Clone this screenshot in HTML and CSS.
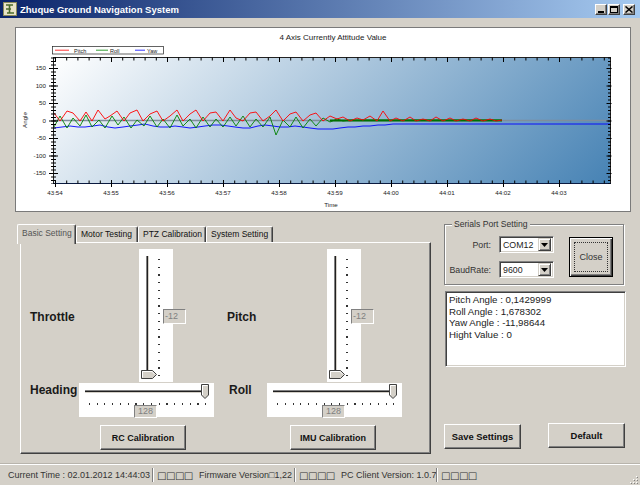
FILE: index.html
```html
<!DOCTYPE html>
<html>
<head>
<meta charset="utf-8">
<title>Zhuque Ground Navigation System</title>
<link rel="stylesheet" href="styles.css">
</head>
<body>
<div class="window">
  <div class="titlebar">
    <svg class="appicon" width="14" height="14" viewBox="0 0 14 14">
      <rect x="0.5" y="0.5" width="13" height="13" fill="#e8e4c8" stroke="#8a8a5a"/>
      <path d="M3 3h7M6.5 3v8M3 7h5M4 11h7" stroke="#4a6a2a" stroke-width="1.6" fill="none"/>
    </svg>
    <span class="title">Zhuque Ground Navigation System</span>
    <div class="capbtns">
      <span class="capbtn"><svg width="8" height="7" viewBox="0 0 8 7"><rect x="1" y="5" width="6" height="2" fill="#000"/></svg></span>
      <span class="capbtn"><svg width="8" height="7" viewBox="0 0 8 7"><rect x="0.5" y="0.5" width="7" height="6" fill="none" stroke="#000"/><rect x="0" y="0" width="8" height="2" fill="#000"/></svg></span>
      <span class="capbtn cap-close"><svg width="8" height="7" viewBox="0 0 8 7"><path d="M0.5 0.5L7.5 6.5M7.5 0.5L0.5 6.5" stroke="#000" stroke-width="1.5"/></svg></span>
    </div>
  </div>

  <div class="client">
    <div class="chart">
      <svg class="plot" width="614" height="183" viewBox="16 28 614 183">
        <defs>
          <linearGradient id="bg" gradientUnits="userSpaceOnUse" x1="53" y1="57" x2="395.5" y2="399.5">
            <stop offset="0" stop-color="#ffffff"/>
            <stop offset="1" stop-color="#4682b4"/>
          </linearGradient>
          <clipPath id="clip"><rect x="53" y="57" width="558" height="127"/></clipPath>
        </defs>
        <text class="ctitle" x="333" y="40" text-anchor="middle">4 Axis Currently Attitude Value</text>

        <rect x="52.5" y="46.5" width="111" height="7.5" fill="#fff" stroke="#222" stroke-width="0.7"/>
        <line x1="55" y1="50.2" x2="69" y2="50.2" stroke="#f00" stroke-width="0.8"/>
        <text class="leg" x="74" y="52.6">Pitch</text>
        <line x1="96" y1="50.2" x2="108" y2="50.2" stroke="#080" stroke-width="0.8"/>
        <text class="leg" x="110" y="52.6">Roll</text>
        <line x1="135" y1="50.2" x2="145" y2="50.2" stroke="#00f" stroke-width="0.8"/>
        <text class="leg" x="147" y="52.6">Yaw</text>

        <rect x="53" y="57" width="558" height="127" fill="url(#bg)"/>

        <g clip-path="url(#clip)" fill="none">
          <line x1="53" y1="120.5" x2="611" y2="120.5" stroke="#7f8d9c" stroke-width="1.6"/>
          <polyline stroke="#0000ff" stroke-width="0.9" points="54,128 62,127 70,126 78,127 85,127 93,126 100,125 108,127 115,128 123,127 130,126 138,125 145,124 153,126 160,127 168,127 175,126 183,127 190,128 198,127 205,126 213,125 220,125 228,126 235,127 243,128 250,128 258,126 265,125 273,126 280,127 288,127 295,126 303,127 310,128 318,129 325,129 333,129 340,128 348,127 355,127 363,126 370,126 378,125 385,125 393,124 400,124 420,124 450,124 500,124 611,124"/>
          <polyline stroke="#008000" stroke-width="0.9" points="54,127 60,116 67,128 73,118 80,126 86,115 92,127 99,120 105,128 112,116 118,125 124,117 131,128 137,120 144,126 150,116 157,127 163,119 170,128 177,115 183,126 190,119 196,128 203,117 210,127 216,119 223,127 230,117 236,126 243,116 250,127 256,119 263,127 270,117 276,135 283,120 290,127 296,117 303,128 310,119 316,126 323,118 330,122 337,119 343,121 350,120 502,120"/>
          <line x1="330" y1="120.5" x2="502" y2="120.5" stroke="#007000" stroke-width="2"/>
          <polyline stroke="#ff0000" stroke-width="0.9" points="54,113 60,121 67,111 73,113 80,121 86,112 92,121 98,110 105,119 110,116 117,111 124,121 130,113 137,110 143,121 150,114 157,111 163,121 170,116 177,110 183,121 190,114 196,110 203,121 210,113 216,112 223,121 230,110 236,118 243,121 250,113 256,112 263,121 270,116 276,110 283,121 290,114 296,112 303,121 310,115 316,113 323,121 330,116 337,119 343,117 350,121 357,118 363,120 370,116 377,121 383,111 390,121 396,118 403,121 410,117 416,121 423,119 430,121 436,117 443,121 450,118 456,121 463,119 470,121 476,118 483,121 490,119 496,121 502,120"/>
        </g>

        <g stroke="#000" fill="none">
          <rect x="53.5" y="57.5" width="557" height="126" stroke="#222"/>
          <line x1="53" y1="183.5" x2="611" y2="183.5" stroke="#0a1a40" stroke-width="1.2"/>
          <line x1="55" y1="182" x2="611" y2="182" stroke-width="3" stroke-dasharray="1 10.2"/>
          <line x1="55" y1="183.5" x2="611" y2="183.5" stroke-width="7" stroke-dasharray="1 55"/>
          <line x1="55" y1="59" x2="611" y2="59" stroke-width="3" stroke-dasharray="1 10.2"/>
          <line x1="55" y1="59.5" x2="611" y2="59.5" stroke-width="5" stroke-dasharray="1 55"/>
          <line x1="53.5" y1="57.5" x2="53.5" y2="184" stroke-width="5" stroke-dasharray="1 2.5"/>
          <line x1="53.5" y1="68" x2="53.5" y2="184" stroke-width="9" stroke-dasharray="1 16.5"/>
          <line x1="609.5" y1="57.5" x2="609.5" y2="184" stroke-width="3" stroke-dasharray="1 2.5"/>
          <line x1="609" y1="68" x2="609" y2="184" stroke-width="5" stroke-dasharray="1 16.5"/>
        </g>

        <g class="ax" text-anchor="end">
          <text x="46" y="70.2">150</text>
          <text x="46" y="87.7">100</text>
          <text x="46" y="105.2">50</text>
          <text x="46" y="122.7">0</text>
          <text x="46" y="140.2">-50</text>
          <text x="46" y="157.7">-100</text>
          <text x="46" y="175.2">-150</text>
        </g>
        <g class="ax" text-anchor="middle">
          <text x="55" y="195">43:54</text>
          <text x="111" y="195">43:55</text>
          <text x="167" y="195">43:56</text>
          <text x="223" y="195">43:57</text>
          <text x="279" y="195">43:58</text>
          <text x="335" y="195">43:59</text>
          <text x="391" y="195">44:00</text>
          <text x="447" y="195">44:01</text>
          <text x="503" y="195">44:02</text>
          <text x="559" y="195">44:03</text>
          <text x="331" y="206.5">Time</text>
          <text transform="translate(26.5 120) rotate(-90)">Angle</text>
        </g>
      </svg>
    </div>

    <div class="lower">
      <div class="tabctl">
        <div class="tabs">
          <div class="tab active">Basic Setting</div>
          <div class="tab">Motor Testing</div>
          <div class="tab">PTZ Calibration</div>
          <div class="tab">System Setting</div>
        </div>
        <div class="panel">
          <div class="grp grp-l">
            <div class="r1">
              <span class="big lbl-v">Throttle</span>
              <div class="vslider">
                <div class="vtrack"></div>
                <div class="vticks"></div>
                <svg class="vthumb" width="16" height="9" viewBox="0 0 16 9"><polygon points="0.5,0.5 11.5,0.5 15.5,4.5 11.5,8.5 0.5,8.5" fill="#d4d0c8" stroke="#404040"/><polyline points="1.5,7.5 1.5,1.5 11,1.5 14,4.5" fill="none" stroke="#fff"/></svg>
                <span class="val vval">-12</span>
              </div>
            </div>
            <div class="r2">
              <span class="big lbl-h">Heading</span>
              <div class="hslider">
                <div class="htrack"></div>
                <div class="hticks"></div>
                <svg class="hthumb" width="8" height="15" viewBox="0 0 8 15"><polygon points="0.5,0.5 7.5,0.5 7.5,11 4,14.5 0.5,11" fill="#d4d0c8" stroke="#404040"/><polyline points="1.5,11 1.5,1.5 6.5,1.5" fill="none" stroke="#fff"/></svg>
                <span class="val hval">128</span>
              </div>
            </div>
            <div class="btn cal">RC Calibration</div>
          </div>

          <div class="grp grp-r">
            <div class="r1">
              <span class="big lbl-v">Pitch</span>
              <div class="vslider">
                <div class="vtrack"></div>
                <div class="vticks"></div>
                <svg class="vthumb" width="16" height="9" viewBox="0 0 16 9"><polygon points="0.5,0.5 11.5,0.5 15.5,4.5 11.5,8.5 0.5,8.5" fill="#d4d0c8" stroke="#404040"/><polyline points="1.5,7.5 1.5,1.5 11,1.5 14,4.5" fill="none" stroke="#fff"/></svg>
                <span class="val vval">-12</span>
              </div>
            </div>
            <div class="r2">
              <span class="big lbl-h">Roll</span>
              <div class="hslider">
                <div class="htrack"></div>
                <div class="hticks"></div>
                <svg class="hthumb" width="8" height="15" viewBox="0 0 8 15"><polygon points="0.5,0.5 7.5,0.5 7.5,11 4,14.5 0.5,11" fill="#d4d0c8" stroke="#404040"/><polyline points="1.5,11 1.5,1.5 6.5,1.5" fill="none" stroke="#fff"/></svg>
                <span class="val hval">128</span>
              </div>
            </div>
            <div class="btn cal">IMU Calibration</div>
          </div>
        </div>
      </div>

      <div class="side">
        <div class="groupbox">
          <span class="glabel">Serials Port Setting</span>
          <div class="fields">
            <div class="frow">
              <span class="flabel">Port:</span>
              <div class="combo"><span class="ctext">COM12</span><span class="cbtn"><svg width="7" height="4" viewBox="0 0 7 4"><polygon points="0,0 7,0 3.5,4" fill="#000"/></svg></span></div>
            </div>
            <div class="frow">
              <span class="flabel">BaudRate:</span>
              <div class="combo"><span class="ctext">9600</span><span class="cbtn"><svg width="7" height="4" viewBox="0 0 7 4"><polygon points="0,0 7,0 3.5,4" fill="#000"/></svg></span></div>
            </div>
          </div>
          <div class="btn defbtn"><span class="focus">Close</span></div>
        </div>

        <div class="readout">
          <div>Pitch Angle : 0,1429999</div>
          <div>Roll Angle : 1,678302</div>
          <div>Yaw Angle : -11,98644</div>
          <div>Hight Value : 0</div>
        </div>

        <div class="sidebtns">
          <div class="btn save">Save Settings</div>
          <div class="btn dflt">Default</div>
        </div>
      </div>
    </div>
  </div>

  <div class="status">
    <span class="st st1">Current Time : 02.01.2012 14:44:03</span>
    <span class="sep"></span>
    <span class="sq">□□□□</span>
    <span class="st st2">Firmware Version□1,22</span>
    <span class="sep"></span>
    <span class="sq">□□□□</span>
    <span class="st st3">PC Client Version: 1.0.7</span>
    <span class="sep"></span>
    <span class="sq">□□□□</span>
    <svg class="grip" width="11" height="11" viewBox="0 0 11 11">
      <g fill="#fff"><rect x="8" y="2" width="1" height="1"/><rect x="5" y="5" width="1" height="1"/><rect x="8" y="5" width="1" height="1"/><rect x="2" y="8" width="1" height="1"/><rect x="5" y="8" width="1" height="1"/><rect x="8" y="8" width="1" height="1"/></g>
      <g fill="#808080"><rect x="9" y="3" width="1" height="1"/><rect x="6" y="6" width="1" height="1"/><rect x="9" y="6" width="1" height="1"/><rect x="3" y="9" width="1" height="1"/><rect x="6" y="9" width="1" height="1"/><rect x="9" y="9" width="1" height="1"/></g>
    </svg>
  </div>
</div>
</body>
</html>
```

FILE: styles.css
```css
* { box-sizing: border-box; margin: 0; padding: 0; }
html, body { width: 640px; height: 485px; overflow: hidden; }
body {
  background: #d4d0c8;
  font-family: "Liberation Sans", Arial, sans-serif;
  font-size: 9px;
  color: #000;
}
.window { display: flex; flex-direction: column; height: 485px; }

/* title bar */
.titlebar {
  height: 18px;
  flex: none;
  display: flex;
  align-items: center;
  padding: 0 5px 0 3px;
  background: linear-gradient(to right, #0a246a, #a6caf0);
}
.appicon { flex: none; }
.title {
  flex: 1;
  margin-left: 3px;
  color: #fff;
  font-weight: bold;
  font-size: 9.5px;
}
.capbtns { display: flex; gap: 1px; }
.capbtn {
  width: 12px;
  height: 11px;
  display: flex;
  align-items: center;
  justify-content: center;
  background: #d4d0c8;
  border: 1px solid;
  border-color: #fff #404040 #404040 #fff;
  box-shadow: inset -1px -1px #808080;
}
.cap-close { margin-left: 2px; }

/* client */
.client { flex: 1; display: flex; flex-direction: column; }
.chart {
  margin: 9px 0 0 15px;
  width: 616px;
  height: 185px;
  background: #fff;
  border: 1px solid #7a7a7a;
  flex: none;
}
.plot { display: block; }
.ctitle { font-size: 8px; fill: #222; }
.leg { font-size: 5.5px; fill: #222; }
.ax text { font-size: 6.2px; fill: #222; }

.lower { display: flex; height: 252px; flex: none; }

/* tab control */
.tabctl { margin: 12px 0 0 20px; width: 411px; }
.tabs { display: flex; align-items: flex-end; height: 18px; }
.tab {
  height: 16px;
  padding: 0 0 0 4px;
  line-height: 15px;
  font-size: 8.5px;
  white-space: nowrap;
  overflow: hidden;
  background: #d4d0c8;
  border: 1px solid;
  border-bottom: none;
  border-color: #fff #404040 #fff #fff;
  box-shadow: inset -1px 0 #808080;
  border-radius: 2px 2px 0 0;
  color: #111;
}
.tab:nth-child(2) { width: 62px; }
.tab:nth-child(3) { width: 68px; }
.tab:nth-child(4) { width: 67px; }
.tab.active {
  width: 59px;
  height: 20px;
  margin: 0 0 -2px -3px;
  line-height: 17px;
  position: relative;
  z-index: 1;
  color: #555;
}
.panel {
  height: 212px;
  display: flex;
  padding: 6px 0 0 9px;
  border: 1px solid;
  border-color: #fff #404040 #404040 #fff;
  box-shadow: inset -1px -1px #808080;
}
.grp { display: flex; flex-direction: column; }
.grp-l { width: 184px; }
.grp-r { margin-left: 13px; width: 176px; }
.r1 { display: flex; align-items: center; height: 133px; }
.r2 { display: flex; margin-top: 1px; height: 34px; }
.big { font-size: 12px; font-weight: bold; color: #1a1a1a; }
.grp-l .lbl-v { width: 109px; padding-top: 3px; }
.grp-r .lbl-v { width: 100px; padding-top: 3px; }
.lbl-h { line-height: 14px; }
.grp-l .lbl-h { width: 49px; }
.grp-r .lbl-h { width: 40px; padding-left: 2px; }

.vslider {
  position: relative;
  width: 34px;
  height: 133px;
  background: #fff;
  display: flex;
  align-items: flex-start;
}
.vtrack {
  margin: 7px 0 0 7px;
  width: 3px;
  height: 120px;
  background: linear-gradient(to right, #808080 0 1px, #202020 1px 2px, #d4d0c8 2px);
}
.vticks {
  margin: 10px 0 0 9px;
  width: 2px;
  height: 117px;
  background: repeating-linear-gradient(to bottom, #333 0 1px, transparent 1px 7.75px);
}
.vthumb { position: absolute; left: 2px; top: 121px; }

.hslider {
  position: relative;
  width: 135px;
  height: 34px;
  background: #fff;
  display: flex;
  flex-direction: column;
}
.htrack {
  margin: 7px 0 0 6px;
  width: 123px;
  height: 3px;
  background: linear-gradient(to bottom, #808080 0 1px, #202020 1px 2px, #d4d0c8 2px);
}
.hticks {
  margin: 10px 0 0 10px;
  width: 117px;
  height: 2px;
  background: repeating-linear-gradient(to right, #333 0 1px, transparent 1px 7.75px);
}
.hthumb { position: absolute; left: 122px; top: 1px; }

.val {
  position: absolute;
  width: 23px;
  background: #d4d0c8;
  border: 1px solid;
  border-color: #808080 #fff #fff #808080;
  color: #808080;
  font-size: 9px;
}
.vval { left: 24px; top: 60px; height: 15px; line-height: 13px; padding-left: 1px; }
.hval { left: 55px; top: 22px; height: 13px; line-height: 11px; text-align: center; }

.btn {
  display: flex;
  align-items: center;
  justify-content: center;
  background: #d4d0c8;
  border: 1px solid;
  border-color: #fff #404040 #404040 #fff;
  box-shadow: inset -1px -1px #808080;
  font-weight: bold;
  font-size: 9px;
  color: #111;
}
.cal { width: 86px; height: 25px; margin-top: 8px; }
.grp-l .cal { margin-left: 70px; }
.grp-r .cal { margin-left: 63px; }

/* side column */
.side { margin-left: 13px; width: 182px; display: flex; flex-direction: column; }
.groupbox {
  position: relative;
  margin-top: 12px;
  width: 180px;
  height: 61px;
  border: 1px solid #808080;
  box-shadow: inset 1px 1px #fff, 1px 1px #fff;
  display: flex;
  align-items: flex-start;
  padding-top: 11px;
}
.glabel {
  position: absolute;
  left: 7px;
  top: -6px;
  padding: 0 2px;
  line-height: 11px;
  background: #d4d0c8;
  font-size: 8.6px;
  color: #333;
}
.fields { display: flex; flex-direction: column; gap: 8px; }
.frow { display: flex; align-items: center; height: 17px; }
.flabel { width: 46px; text-align: right; margin-right: 8px; font-size: 8.8px; color: #333; }
.combo {
  width: 55px;
  height: 17px;
  display: flex;
  align-items: center;
  padding: 2px;
  background: #fff;
  border: 1px solid;
  border-color: #808080 #fff #fff #808080;
  box-shadow: inset 1px 1px #404040, inset -1px -1px #d4d0c8;
}
.ctext { flex: 1; padding-left: 1px; font-size: 8.8px; color: #222; }
.cbtn {
  width: 13px;
  height: 13px;
  display: flex;
  align-items: center;
  justify-content: center;
  background: #d4d0c8;
  border: 1px solid;
  border-color: #d4d0c8 #404040 #404040 #d4d0c8;
  box-shadow: inset 1px 1px #fff, inset -1px -1px #808080;
}
.defbtn {
  margin: 1px 0 0 15px;
  width: 44px;
  height: 40px;
  border: 1px solid #000;
  box-shadow: inset 1px 1px #fff, inset -1px -1px #404040, inset -2px -2px #808080;
  padding: 4px;
  font-weight: normal;
  font-size: 9px;
  color: #333;
}
.focus {
  width: 100%;
  height: 100%;
  display: flex;
  align-items: center;
  justify-content: center;
  border: 1px dotted #333;
}

.readout {
  margin: 6px 0 0 1px;
  width: 181px;
  height: 76px;
  background: #fff;
  border: 1px solid;
  border-color: #808080 #fff #fff #808080;
  box-shadow: inset 1px 1px #404040, inset -1px -1px #d4d0c8;
  padding: 2px 3px;
  font-size: 9.7px;
  line-height: 11.7px;
  color: #222;
}

.sidebtns { display: flex; align-items: flex-start; }
.save { margin-top: 57px; width: 77px; height: 25px; font-size: 9.4px; }
.dflt { margin: 56px 0 0 27px; width: 77px; height: 25px; font-size: 9.4px; }

/* status bar */
.status {
  height: 21px;
  flex: none;
  display: flex;
  align-items: center;
  border-top: 1px solid #fff;
  box-shadow: 0 -1px #b8b4ac;
  font-size: 9px;
  color: #333;
}
.st { white-space: nowrap; }
.st1 { margin-left: 8px; width: 144px; }
.st2 { width: 95px; }
.st3 { width: 95px; }
.sep {
  width: 2px;
  height: 14px;
  border-left: 1px solid #808080;
  border-right: 1px solid #fff;
}
.sq {
  margin-left: 3px;
  width: 42px;
  font-family: "DejaVu Sans", sans-serif;
  font-size: 10px;
  letter-spacing: -0.5px;
  color: #333;
}
.grip { margin-left: auto; margin-right: 1px; align-self: flex-end; }
```
